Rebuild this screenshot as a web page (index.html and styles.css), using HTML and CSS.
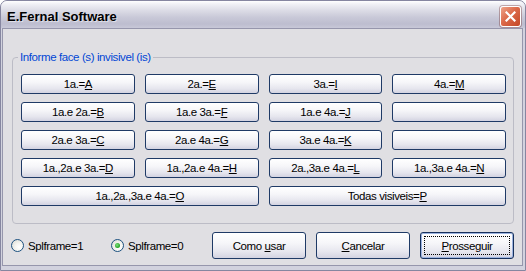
FILE: index.html
```html
<!DOCTYPE html>
<html lang="pt">
<head>
  <meta charset="UTF-8" />
  <title>E.Fernal Software</title>
  <link rel="stylesheet" href="styles.css">
</head>
<body>
  <div class="window">
    <div class="titlebar">
      <span class="title">E.Fernal Software</span>
      <button class="close" title="Fechar">
        <svg width="11" height="11" viewBox="0 0 11 11">
          <path d="M1.5 1.5L9.5 9.5M9.5 1.5L1.5 9.5" stroke="#fff" stroke-width="2.2" stroke-linecap="square" fill="none"/>
        </svg>
      </button>
    </div>

    <div class="frame">
      <div class="client">
        <fieldset class="group">
          <legend>Informe face (s) invisivel (is)</legend>
          <div class="grid">
            <button class="btn">1a.=<u>A</u></button>
            <button class="btn">2a.=<u>E</u></button>
            <button class="btn">3a.=<u>I</u></button>
            <button class="btn">4a.=<u>M</u></button>

            <button class="btn">1a.e 2a.=<u>B</u></button>
            <button class="btn">1a.e 3a.=<u>F</u></button>
            <button class="btn">1a.e 4a.=<u>J</u></button>
            <button class="btn"></button>

            <button class="btn">2a.e 3a.=<u>C</u></button>
            <button class="btn">2a.e 4a.=<u>G</u></button>
            <button class="btn">3a.e 4a.=<u>K</u></button>
            <button class="btn"></button>

            <button class="btn">1a.,2a.e 3a.=<u>D</u></button>
            <button class="btn">1a.,2a.e 4a.=<u>H</u></button>
            <button class="btn">2a.,3a.e 4a.=<u>L</u></button>
            <button class="btn">1a.,3a.e 4a.=<u>N</u></button>

            <button class="btn wide">1a.,2a.,3a.e 4a.=<u>O</u></button>
            <button class="btn wide">Todas visiveis=<u>P</u></button>
          </div>
        </fieldset>

        <div class="footer">
          <label class="radio"><span class="circle"></span>Splframe=1</label>
          <label class="radio checked"><span class="circle"></span>Splframe=0</label>

          <div class="actions">
            <button class="btn action">Como <u>u</u>sar</button>
            <button class="btn action"><u>C</u>ancelar</button>
            <button class="btn action default"><span class="focus"><u>P</u>rosseguir</span></button>
          </div>
        </div>
      </div>
    </div>
  </div>
</body>
</html>
```

FILE: styles.css
```css
* {
  box-sizing: border-box;
}

body {
  margin: 0;
  background: #fff;
  font-family: 'Liberation Sans', Arial, sans-serif;
  font-size: 11px;
  color: #000;
}

.window {
  width: 526px;
  height: 271px;
  border: 1px solid #8686a0;
  border-radius: 7px 7px 0 0;
  background: #d2d2de;
  display: flex;
  flex-direction: column;
  overflow: hidden;
}

/* Title bar */
.titlebar {
  height: 27px;
  flex: none;
  display: flex;
  align-items: center;
  padding: 0 4px 0 6px;
  background: linear-gradient(to bottom, #ffffff 0%, #f0f0f5 12%, #dcdce6 35%, #c9c9d8 60%, #bdbdcf 85%, #c8c8d8 100%);
}

.title {
  font-weight: bold;
  font-size: 13px;
  color: #000;
  text-shadow: 1px 1px 0 rgba(255, 255, 255, 0.5);
  margin-top: 3px;
}

.close {
  margin-left: auto;
  margin-top: 3px;
  width: 21px;
  height: 21px;
  padding: 0;
  border: 1px solid #fff;
  border-radius: 3px;
  background: linear-gradient(135deg, #eea48a 0%, #dc6a4a 45%, #c44726 100%);
  display: flex;
  align-items: center;
  justify-content: center;
  box-shadow: 0 0 0 1px rgba(120, 60, 60, 0.4);
}

/* Frame + client area */
.frame {
  flex: 1;
  padding: 0 2px 4px 1px;
  display: flex;
}

.client {
  flex: 1;
  border: 1px solid #9696ac;
  background: #e0dfe3;
  display: flex;
  flex-direction: column;
}

/* Group box */
.group {
  margin: 22px 8px 0 9px;
  padding: 10px 7px 17px 8px;
  border: 1px solid #bcbcc6;
  border-radius: 4px;
  min-width: 0;
}

.group legend {
  margin-left: -3px;
  padding: 0 2px;
  color: #0046d5;
  font-size: 11.5px;
  line-height: 13px;
  letter-spacing: -0.4px;
}

.grid {
  display: grid;
  grid-template-columns: repeat(4, 1fr);
  grid-auto-rows: 20px;
  column-gap: 10px;
  row-gap: 8px;
}

.grid .wide {
  grid-column: span 2;
}

/* XP buttons */
.btn {
  font-family: inherit;
  font-size: 11.5px;
  letter-spacing: -0.4px;
  color: #000;
  padding: 0;
  border: 1px solid #1f3a66;
  border-radius: 3px;
  background: linear-gradient(to bottom, #ffffff 0%, #f6f6f9 40%, #e6e6ee 75%, #d3d3e1 100%);
}

.btn u {
  text-decoration: underline;
}

/* Footer */
.footer {
  display: flex;
  align-items: center;
  margin-top: 8px;
  padding: 0 8px;
  height: 27px;
}

.radio {
  display: flex;
  align-items: center;
  gap: 4px;
  width: 100px;
  font-size: 11.5px;
  letter-spacing: -0.4px;
}

.circle {
  width: 13px;
  height: 13px;
  border: 1px solid #1c5180;
  border-radius: 50%;
  background: radial-gradient(circle at 65% 65%, #ffffff 0%, #f4f4f0 40%, #d6d6ce 100%);
  display: flex;
  align-items: center;
  justify-content: center;
}

.radio.checked .circle::after {
  content: '';
  width: 5px;
  height: 5px;
  border-radius: 50%;
  background: radial-gradient(circle at 40% 40%, #7fe07f 0%, #21a121 70%);
}

.actions {
  margin-left: auto;
  display: flex;
  gap: 10px;
}

.action {
  width: 94px;
  height: 27px;
}

.default {
  position: relative;
  border-color: #16305c;
  box-shadow: inset 0 0 0 1px #9cb3e0;
}

.default .focus::after {
  content: '';
  position: absolute;
  inset: 3px;
  border: 1px dotted #000;
}
```
